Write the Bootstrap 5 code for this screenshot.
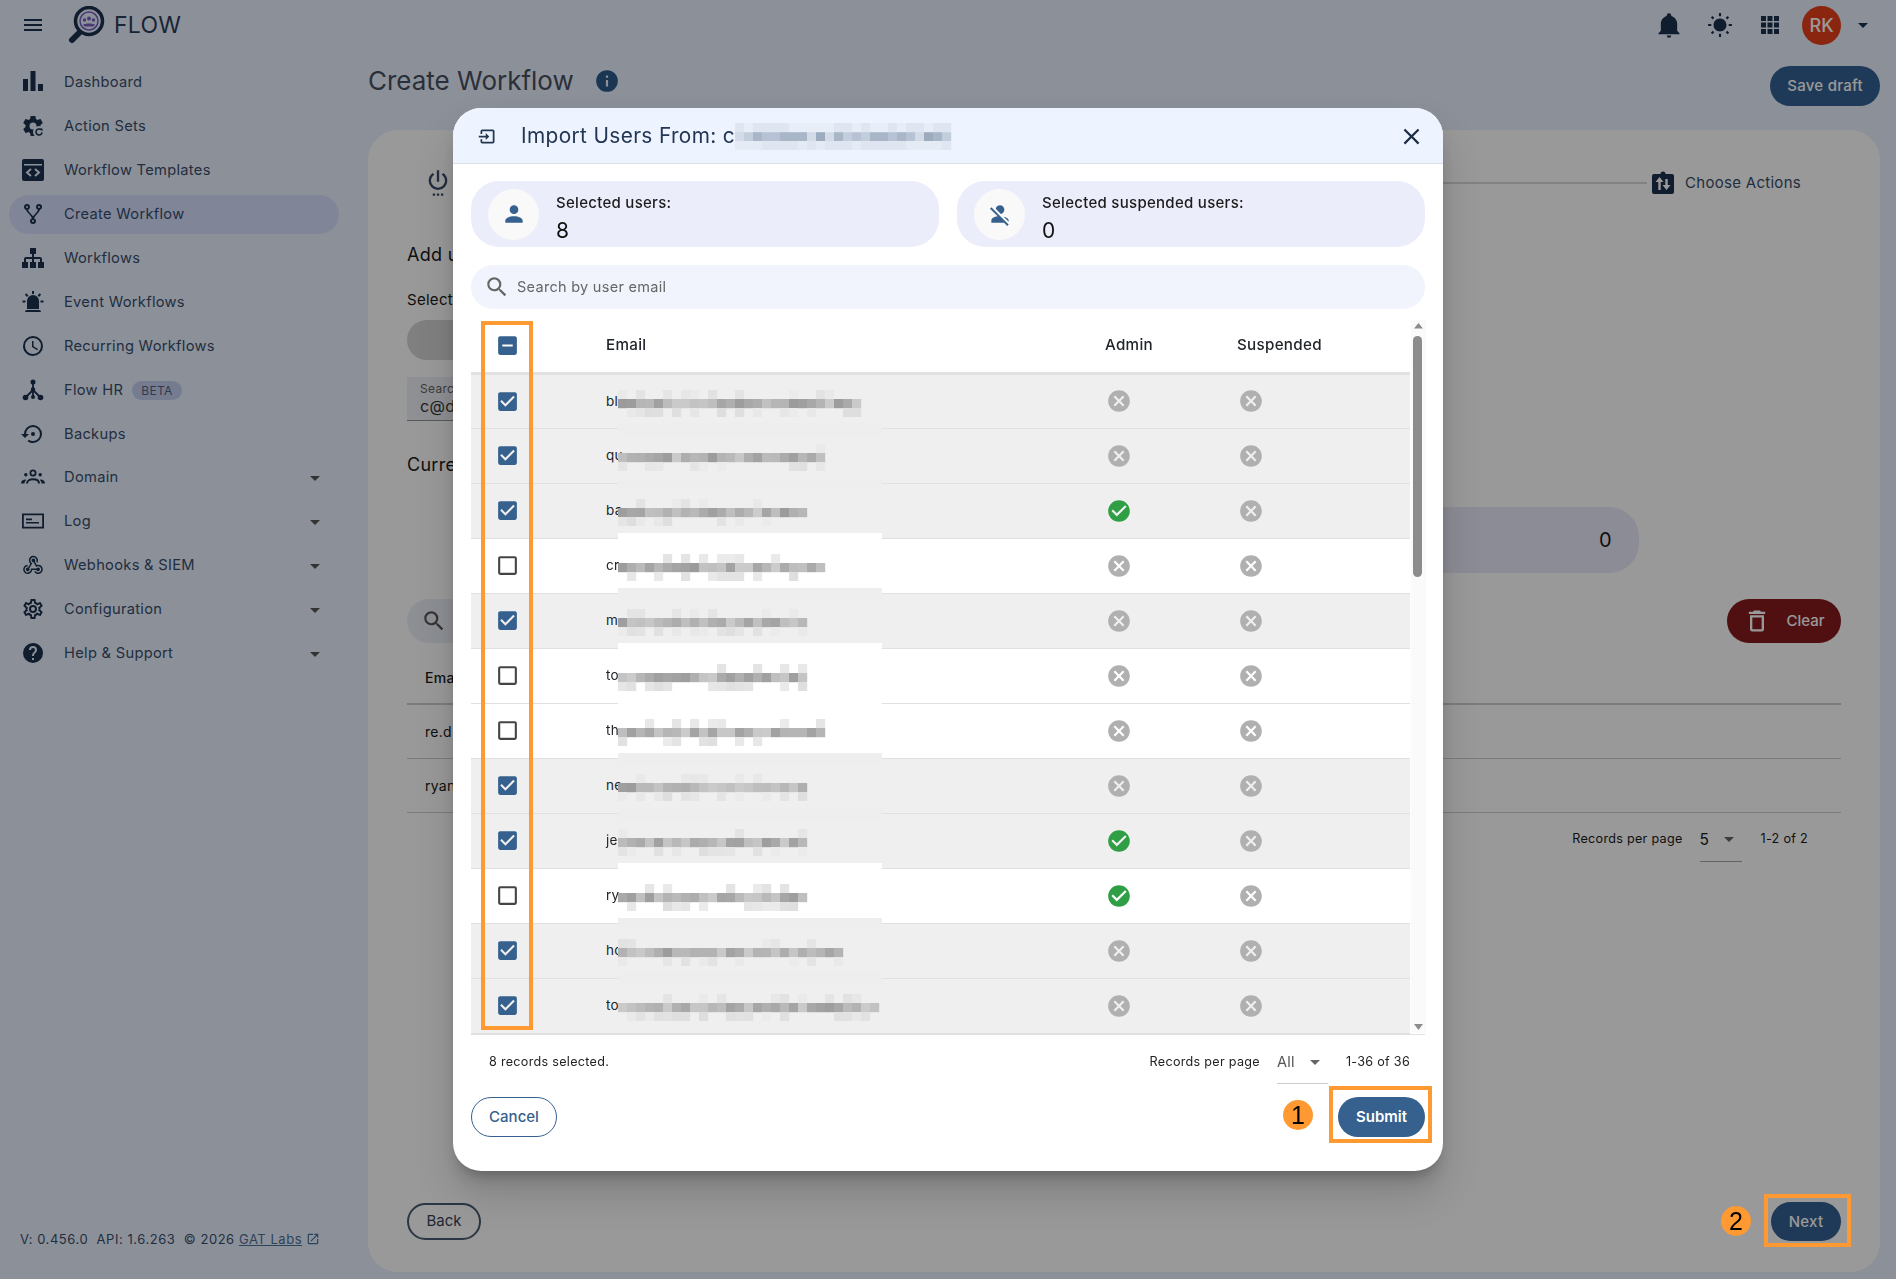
<!DOCTYPE html>
<html lang="en">
<head>
<meta charset="UTF-8" />
<title>Create Workflow</title>
<link href="https://cdn.jsdelivr.net/npm/bootstrap@5.3.0/dist/css/bootstrap.min.css" rel="stylesheet" />
<style>
  body { font-family: Inter, "Liberation Sans", sans-serif; background: #e7f0ff; height: 1279px; overflow: hidden; letter-spacing: .0178em; color: #000; }
  svg { fill: currentColor; flex: none; display: block; }
  .top-bar { height: 50px; color: #001a3a; }
  .menu-btn { margin-left: 21px; width: 24px; }
  .brand-word { font-size: 23px; line-height: 1; color: #12294a; letter-spacing: .01em; margin-left: 8px; }
  .logo-mark { margin-left: 23px; }
  .user-dot { width: 39px; height: 39px; background: #e42c00; color: #fff; font-size: 18px; font-weight: 500; letter-spacing: 0; }
  .side-col { width: 368px; height: 1229px; flex: none; }
  .side-list { margin-top: 10px; }
  .side-item { height: 44px; padding-left: 21px; color: #24385a; font-size: 14.7px; position: relative; }
  .side-item:nth-child(10) { margin-top: -1px; }
  .side-item svg { width: 24px; height: 24px; color: #001a3a; margin-right: 19px; }
  .side-item.is-on::before { content: ""; position: absolute; left: 9px; width: 330px; top: 2.5px; height: 39px; background: #d1dcfd; border-radius: 20px; }
  .side-item > * { position: relative; }
  .side-item .menu-caret { position: absolute; left: 303px; top: 11px; margin: 0; color: #444; }
  .beta-chip { background: #bfcaef; color: #3f4f72; font-size: 12px; height: 19px; line-height: 19px; padding: 0 9px; border-radius: 10px; margin-left: 9px; }
  .side-foot { font-size: 13px; color: #24385a; margin-left: 20px; margin-bottom: 30px; letter-spacing: .042em; white-space: pre; }
  .side-foot a { color: #36618e; }
  .main-col { width: 1512px; flex: none; }
  .title-row { height: 80px; }
  .page-title { font-size: 26px; font-weight: 400; color: #323c50; margin: 0; letter-spacing: 0; }
  .info-mark { margin-left: 20px; color: #16497d; }
  .dark-btn { background: #1e5187; color: #fff; border: 0; font-size: 15px; font-weight: 500; border-radius: 20px; height: 40px; padding: 0; letter-spacing: .0178em; }
  .save-btn { width: 110px; margin-top: 16px; }
  .step-card { background: #fff; border-radius: 30px; height: 1142px; padding: 30px 39px 0; position: relative; }
  .step-row { height: 46px; }
  .step-line { height: 2px; background: #d5d5d5; margin: 0 4px 0 0; }
  .step-label { font-size: 15px; color: #24385a; margin-left: 10px; margin-right: 40px; }
  .add-head { font-size: 18px; line-height: 24px; margin-top: 37px; }
  .sel-label { font-size: 15px; line-height: 20px; margin-top: 23px; }
  .grey-pill { height: 40px; background: #d1d1d1; border-radius: 20px; width: 400px; margin-top: 10px; }
  .domain-field { height: 44px; background: #ebeef4; border-bottom: 1px solid #888; margin-top: 17px; width: 400px; padding: 5px 13px; font-size: 12px; line-height: 14px; color: #555; }
  .domain-field div { font-size: 16px; line-height: 20px; color: #222; }
  .cur-head { font-size: 18px; line-height: 24px; margin-top: 32px; }
  .zero-pill { height: 66px; width: 600px; margin: 30px 202px 0 auto; background: #e7e7fa; border-radius: 30px; font-size: 20px; padding-right: 27px; }
  .tool-row { height: 44px; margin-top: 26px; }
  .tool-search { width: 500px; height: 44px; background: #e8edf5; border-radius: 22px; padding-left: 14px; color: #444; }
  .clear-btn { background: #780205; color: #fff; font-size: 15px; font-weight: 500; width: 114px; height: 44px; border-radius: 22px; border: 0; padding: 0; }
  .bg-row { border-bottom: 1px solid #c9c9c9; height: 54px; padding-left: 18px; font-size: 14px; }
  .bg-head { height: 62px; border-bottom-width: 2px; font-weight: 500; padding-top: 8px; }
  .pager-row { font-size: 12.6px; height: 49px; padding-right: 33px; }
  .pager-row .pick-num { font-size: 15.5px; width: 42px; margin: 0 19px 0 17px; border-bottom: 1px solid #999; height: 49px; padding-top: 15px; position: relative; }
  .pick-num svg { position: absolute; right: 1px; top: 14px; color: #555; }
  .back-btn { position: absolute; left: 39px; top: 1073px; width: 74px; height: 37px; background: transparent; border: 2px solid #364a66; border-radius: 19px; font-size: 15px; padding: 0; color: #1c2c44; }
  .next-btn { position: absolute; right: 39px; top: 1072px; width: 70px; height: 39px; padding-top: 1px; }

  .modal-backdrop.show { background: #212121; opacity: .46; }
  .import-box { position: fixed; left: 453px; top: 108px; width: 990px; height: 1063px; z-index: 1060; border: 0; border-radius: 28px; overflow: hidden; background: #fff; box-shadow: 0 11px 15px -7px rgba(0,0,0,.3), 0 24px 38px 3px rgba(0,0,0,.14); }
  .import-box .modal-header { height: 56px; background: #edf3ff; border-bottom: 1px solid #dcdfe4; padding: 1px 18px 0 24px; border-radius: 0; flex: none; }
  .import-title { font-size: 20.8px; font-weight: 400; color: #233653; margin: 0 0 0 23px; line-height: 1; letter-spacing: .018em; }
  .x-btn { color: #1c2c44; margin-left: auto; }
  .import-box .modal-body { padding: 17px 18px 0; flex: none; }
  .stat-pill { width: 468px; height: 66px; background: #ecedfa; border-radius: 28px; padding-left: 17px; }
  .stat-disc { width: 51px; height: 51px; border-radius: 50%; background: #f9f9f9; color: #36618e; margin-right: 17px; }
  .stat-name { font-size: 15px; line-height: 18px; font-weight: 500; color: #1c1c1c; margin-top: 10px; }
  .stat-val { font-size: 21px; line-height: 26px; margin-top: 6px; color: #111; }
  .find-bar { height: 44px; margin-top: 18px; background: #f1f4fd; border-radius: 22px; padding-left: 13px; color: #666; font-size: 14.5px; }
  .find-bar svg { margin-right: 7px; }
  .grid-wrap { margin-top: 11px; height: 713px; }
  .user-table { width: 939px; flex: none; margin: 0; table-layout: fixed; font-size: 13.5px; --bs-table-bg: transparent; }
  .user-table th { height: 53px; font-weight: 500; font-size: 15.2px; border-bottom: 3px solid #e2e2e2; padding: 0; vertical-align: middle; }
  .user-table td { height: 55px; padding: 0; vertical-align: middle; border-bottom: 1px solid #e0e0e0; }
  .user-table tr.on-row td { background: #efefef; }
  .user-table .box-cell { padding-left: 24px; color: #36618e; }
  .box-cell svg { width: 25px; height: 25px; }
  .box-cell .off-box { color: #444; }
  .mail-cell { position: relative; }
  .mail-cell svg { position: absolute; left: 12px; top: 0; overflow: visible; }
  .state-icon { width: 26px; height: 26px; margin-left: 1px; }
  .scroll-col { width: 15px; background: #fafafa; margin-left: 1px; color: #8c8c8c; }
  .scroll-thumb { width: 9px; height: 241px; background: #8c8c8c; border-radius: 5px; margin: 1px 0 0 2px; }
  .foot-line { border-top: 1px solid #e0e0e0; margin-top: 1px; height: 49px; font-size: 12.6px; color: #222; }
  .foot-line .pick-num { font-size: 14.5px; width: 51px; margin: 0 18px 0 17px; border-bottom: 1px solid #ccc; height: 49px; padding-top: 16px; position: relative; color: #555; }
  .foot-line .pick-num svg { position: absolute; right: 1px; top: 15px; color: #666; }
  .import-box .modal-footer { padding: 14px 18px 0; border: 0; display: flex; justify-content: space-between; flex: none; }
  .import-box .modal-footer > * { margin: 0; }
  .cancel-btn { width: 86px; height: 40px; border: 1px solid #36618e; color: #36618e; background: #fff; border-radius: 20px; font-size: 15px; font-weight: 500; padding: 0; }
  .submit-btn { width: 87px; height: 40px; background: #36618e; color: #fff; border: 0; border-radius: 20px; font-size: 15px; font-weight: 600; padding: 0; }
  .mark-box { position: fixed; border: 4px solid #ff9a33; z-index: 1070; }
  .mark-num { position: fixed; width: 30px; height: 30px; border-radius: 50%; background: #ff9a33; z-index: 1070; font: 25px/30px "Liberation Sans", sans-serif; color: #000; text-align: center; letter-spacing: 0; }
</style>
</head>
<body>
<svg width="0" height="0" style="position:absolute">
  <symbol id="i-menu" viewBox="0 0 24 24"><path d="M3,6H21V8H3V6M3,11H21V13H3V11M3,16H21V18H3V16Z"/></symbol>
  <symbol id="i-bars" viewBox="0 0 24 24"><path d="M2 9h5v12H2zM9.500 1h5v20h-5zM17 14h5v7h-5z"/></symbol>
  <symbol id="i-cogsync" viewBox="0 0 24 24"><path d="M12,15.500A3.500,3.500 0 0,1 8.500,12A3.500,3.500 0 0,1 12,8.500A3.500,3.500 0 0,1 15.500,12A3.500,3.500 0 0,1 12,15.500M19.430,12.970C19.470,12.650 19.500,12.330 19.500,12C19.500,11.670 19.470,11.340 19.430,11L21.540,9.370C21.730,9.220 21.780,8.950 21.660,8.730L19.660,5.270C19.540,5.050 19.270,4.960 19.050,5.050L16.560,6.050C16.040,5.660 15.500,5.320 14.870,5.070L14.500,2.420C14.460,2.180 14.250,2 14,2H10C9.750,2 9.540,2.180 9.500,2.420L9.130,5.070C8.500,5.320 7.960,5.660 7.440,6.050L4.950,5.050C4.730,4.960 4.460,5.050 4.340,5.270L2.340,8.730C2.210,8.950 2.270,9.220 2.460,9.370L4.570,11C4.530,11.340 4.500,11.670 4.500,12C4.500,12.330 4.530,12.650 4.570,12.970L2.460,14.630C2.270,14.780 2.210,15.050 2.340,15.270L4.340,18.730C4.460,18.950 4.730,19.030 4.950,18.950L7.440,17.940C7.960,18.340 8.500,18.680 9.130,18.930L9.500,21.580C9.540,21.820 9.750,22 10,22H14C14.250,22 14.460,21.820 14.500,21.580L14.870,18.930C15.500,18.670 16.040,18.340 16.560,17.940L19.050,18.950C19.270,19.030 19.540,18.950 19.660,18.730L21.660,15.270C21.780,15.050 21.730,14.780 21.540,14.630L19.430,12.970Z"/><circle cx="18" cy="18" r="6" fill="#e7f0ff"/><path d="M21 18.500a3 3 0 1 1-1-2.800" fill="none" stroke="currentColor" stroke-width="1.600"/><path d="M18.500 14.500h3v3z"/></symbol>
  <symbol id="i-tpl" viewBox="0 0 24 24"><path fill-rule="evenodd" d="M3 1h18a2 2 0 0 1 2 2v18a2 2 0 0 1-2 2H3a2 2 0 0 1-2-2V3a2 2 0 0 1 2-2zM3 6v1.500h18V6z"/><path d="M10 11l-4 3.500L10 18M14 11l4 3.500L14 18" fill="none" stroke="#e7f0ff" stroke-width="2"/></symbol>
  <symbol id="i-fork" viewBox="0 0 24 24"><path d="M6,2A3,3 0 0,1 9,5C9,6.280 8.190,7.380 7.060,7.810C7.150,8.270 7.390,8.830 8,9.630C9,10.920 11,12.830 12,14.170C13,12.830 15,10.920 16,9.630C16.610,8.830 16.850,8.270 16.940,7.810C15.810,7.380 15,6.280 15,5A3,3 0 0,1 18,2A3,3 0 0,1 21,5C21,6.320 20.140,7.450 18.950,7.850C18.870,8.370 18.640,9 18,9.830C17,11.170 15,13.080 14,14.380C13.390,15.170 13.150,15.730 13.060,16.190C14.190,16.620 15,17.720 15,19A3,3 0 0,1 12,22A3,3 0 0,1 9,19C9,17.720 9.810,16.620 10.940,16.190C10.850,15.730 10.610,15.170 10,14.380C9,13.080 7,11.170 6,9.830C5.360,9 5.130,8.370 5.050,7.850C3.860,7.450 3,6.320 3,5A3,3 0 0,1 6,2M6,4A1,1 0 0,0 5,5A1,1 0 0,0 6,6A1,1 0 0,0 7,5A1,1 0 0,0 6,4M18,4A1,1 0 0,0 17,5A1,1 0 0,0 18,6A1,1 0 0,0 19,5A1,1 0 0,0 18,4M12,18A1,1 0 0,0 11,19A1,1 0 0,0 12,20A1,1 0 0,0 13,19A1,1 0 0,0 12,18Z"/></symbol>
  <symbol id="i-sitemap" viewBox="0 0 24 24"><path d="M9,2V8H11V11H5C3.890,11 3,11.890 3,13V16H1V22H7V16H5V13H11V16H9V22H15V16H13V13H19V16H17V22H23V16H21V13C21,11.890 20.110,11 19,11H13V8H15V2H9Z"/></symbol>
  <symbol id="i-alarm" viewBox="0 0 24 24"><path d="M6,6.900L3.870,4.780L5.280,3.370L7.400,5.500L6,6.900M13,1V4H11V1H13M20.130,4.780L18,6.900L16.600,5.500L18.720,3.370L20.130,4.780M4.500,10.500V12.500H1.500V10.500H4.500M19.500,10.500H22.500V12.500H19.500V10.500M6,20H18A2,2 0 0,1 20,22H4A2,2 0 0,1 6,20M12,5A6,6 0 0,1 18,11V19H6V11A6,6 0 0,1 12,5Z"/></symbol>
  <symbol id="i-clock" viewBox="0 0 24 24"><path d="M12,20A8,8 0 0,0 20,12A8,8 0 0,0 12,4A8,8 0 0,0 4,12A8,8 0 0,0 12,20M12,2A10,10 0 0,1 22,12A10,10 0 0,1 12,22C6.470,22 2,17.500 2,12A10,10 0 0,1 12,2M12.500,7V12.250L17,14.920L16.250,16.150L11,13V7H12.500Z"/></symbol>
  <symbol id="i-tree" viewBox="0 0 24 24"><path d="M12 4v8M12 12l-7 7M12 12l7 7M12 12v7" fill="none" stroke="currentColor" stroke-width="1.800"/><circle cx="12" cy="4" r="2.500"/><circle cx="12" cy="11.500" r="2.200"/><circle cx="4.500" cy="19.500" r="2.800"/><circle cx="19.500" cy="19.500" r="2.800"/><circle cx="12" cy="19" r="2"/></symbol>
  <symbol id="i-restore" viewBox="0 0 24 24"><path d="M12,3A9,9 0 0,0 3,12H0L4,16L8,12H5A7,7 0 0,1 12,5A7,7 0 0,1 19,12A7,7 0 0,1 12,19C10.500,19 9.090,18.500 7.940,17.700L6.500,19.140C8.040,20.300 9.940,21 12,21A9,9 0 0,0 21,12A9,9 0 0,0 12,3M14,12A2,2 0 0,0 12,10A2,2 0 0,0 10,12A2,2 0 0,0 12,14A2,2 0 0,0 14,12Z"/></symbol>
  <symbol id="i-people" viewBox="0 0 24 24"><circle cx="12" cy="8" r="2.600" fill="none" stroke="currentColor" stroke-width="1.800"/><circle cx="4.800" cy="9.800" r="1.700"/><circle cx="19.200" cy="9.800" r="1.700"/><path d="M6 18.500c0-3 2.800-4.300 6-4.300s6 1.300 6 4.300" fill="none" stroke="currentColor" stroke-width="2"/><path d="M0 18.500c0-2.600 2-4 4.500-4l.800.500c-1.300.800-1.800 2-1.800 3.500zM24 18.500c0-2.600-2-4-4.500-4l-.800.500c1.300.800 1.800 2 1.800 3.500z"/></symbol>
  <symbol id="i-log" viewBox="0 0 24 24"><path d="M1 4.500h22v15H1zM2.800 6.300v11.400h18.400V6.300z" fill-rule="evenodd"/><path d="M5 9.500h6v1.700H5zM5 13h13v1.500H5z"/></symbol>
  <symbol id="i-hook" viewBox="0 0 24 24"><path d="M10.460,19C9,21.070 6.150,21.590 4.090,20.150C2.040,18.710 1.560,15.840 3,13.750C3.870,12.500 5.210,11.830 6.580,11.770L6.630,13.200C5.720,13.270 4.840,13.740 4.270,14.560C3.270,16 3.580,17.940 4.950,18.910C6.330,19.870 8.260,19.500 9.260,18.070C9.570,17.620 9.750,17.130 9.820,16.630V15.620L15.400,15.580L15.470,15.470C16,14.550 17.150,14.230 18.050,14.750C18.950,15.270 19.260,16.430 18.730,17.350C18.200,18.260 17.040,18.580 16.140,18.060C15.730,17.830 15.440,17.460 15.310,17.040L11.240,17.060C11.130,17.730 10.870,18.380 10.460,19M17.740,11.860C20.270,12.170 22.070,14.440 21.760,16.930C21.450,19.430 19.150,21.200 16.620,20.890C15.130,20.710 13.900,19.860 13.190,18.680L14.430,17.960C14.920,18.730 15.750,19.280 16.750,19.410C18.500,19.620 20.050,18.430 20.260,16.760C20.470,15.090 19.230,13.560 17.500,13.350C16.960,13.290 16.440,13.360 15.970,13.530L15.120,13.970L12.540,9.200H12.320C11.260,9.160 10.440,8.290 10.470,7.250C10.500,6.210 11.400,5.400 12.450,5.440C13.500,5.500 14.330,6.360 14.300,7.400C14.280,7.850 14.110,8.240 13.840,8.540L15.740,12.050C16.360,11.850 17.040,11.780 17.740,11.860M8.250,9.140C7.250,6.790 8.310,4.100 10.620,3.120C12.940,2.140 15.620,3.250 16.620,5.600C17.210,6.970 17.090,8.470 16.420,9.670L15.180,8.950C15.600,8.140 15.670,7.150 15.270,6.220C14.590,4.620 12.780,3.850 11.230,4.500C9.670,5.160 8.970,7 9.650,8.600C9.930,9.260 10.400,9.770 10.970,10.110L11.360,10.320L8.290,15.310C8.320,15.360 8.360,15.420 8.390,15.500C8.880,16.410 8.540,17.560 7.620,18.050C6.710,18.540 5.560,18.180 5.060,17.240C4.570,16.310 4.910,15.160 5.830,14.670C6.220,14.460 6.650,14.410 7.060,14.500L9.370,10.730C8.900,10.300 8.500,9.760 8.250,9.140Z"/></symbol>
  <symbol id="i-cogline" viewBox="0 0 24 24"><path d="M12,8A4,4 0 0,1 16,12A4,4 0 0,1 12,16A4,4 0 0,1 8,12A4,4 0 0,1 12,8M12,10A2,2 0 0,0 10,12A2,2 0 0,0 12,14A2,2 0 0,0 14,12A2,2 0 0,0 12,10M10,22C9.750,22 9.540,21.820 9.500,21.580L9.130,18.930C8.500,18.680 7.960,18.340 7.440,17.940L4.950,18.950C4.730,19.030 4.460,18.950 4.340,18.730L2.340,15.270C2.210,15.050 2.270,14.780 2.460,14.630L4.570,12.970L4.500,12L4.570,11L2.460,9.370C2.270,9.220 2.210,8.950 2.340,8.730L4.340,5.270C4.460,5.050 4.730,4.960 4.950,5.050L7.440,6.050C7.960,5.660 8.500,5.320 9.130,5.070L9.500,2.420C9.540,2.180 9.750,2 10,2H14C14.250,2 14.460,2.180 14.500,2.420L14.870,5.070C15.500,5.320 16.040,5.660 16.560,6.050L19.050,5.050C19.270,4.960 19.540,5.050 19.660,5.270L21.660,8.730C21.790,8.950 21.730,9.220 21.540,9.370L19.430,11L19.500,12L19.430,13L21.540,14.630C21.730,14.780 21.790,15.050 21.660,15.270L19.660,18.730C19.540,18.950 19.270,19.040 19.050,18.950L16.560,17.950C16.040,18.340 15.500,18.680 14.870,18.930L14.500,21.580C14.460,21.820 14.250,22 14,22H10M11.250,4L10.880,6.610C9.680,6.860 8.620,7.500 7.850,8.390L5.440,7.350L4.690,8.650L6.800,10.200C6.400,11.370 6.400,12.640 6.800,13.800L4.680,15.360L5.430,16.660L7.860,15.620C8.630,16.500 9.680,17.140 10.870,17.380L11.240,20H12.760L13.130,17.390C14.320,17.140 15.370,16.500 16.140,15.620L18.570,16.660L19.320,15.360L17.200,13.810C17.600,12.640 17.600,11.370 17.200,10.200L19.310,8.650L18.560,7.350L16.150,8.390C15.380,7.500 14.320,6.860 13.120,6.620L12.750,4H11.250Z"/></symbol>
  <symbol id="i-help" viewBox="0 0 24 24"><path d="M15.070,11.250L14.170,12.170C13.450,12.890 13,13.500 13,15H11V14.500C11,13.390 11.450,12.390 12.170,11.670L13.410,10.410C13.780,10.050 14,9.550 14,9C14,7.890 13.100,7 12,7A2,2 0 0,0 10,9H8A4,4 0 0,1 12,5A4,4 0 0,1 16,9C16,9.880 15.640,10.670 15.070,11.250M13,19H11V17H13M12,2A10,10 0 0,0 2,12A10,10 0 0,0 12,22A10,10 0 0,0 22,12C22,6.470 17.500,2 12,2Z"/></symbol>
  <symbol id="i-caret" viewBox="0 0 24 24"><path d="M7,10L12,15L17,10H7Z"/></symbol>
  <symbol id="i-bell" viewBox="0 0 24 24"><path d="M21,19V20H3V19L5,17V11C5,7.900 7.030,5.170 10,4.290C10,4.190 10,4.100 10,4A2,2 0 0,1 12,2A2,2 0 0,1 14,4C14,4.100 14,4.190 14,4.290C16.970,5.170 19,7.900 19,11V17L21,19M14,21A2,2 0 0,1 12,23A2,2 0 0,1 10,21"/></symbol>
  <symbol id="i-sun" viewBox="0 0 24 24"><path d="M3.550 19.090L4.960 20.500L6.760 18.710L5.340 17.290M12 6C8.690 6 6 8.690 6 12S8.690 18 12 18 18 15.310 18 12C18 8.680 15.310 6 12 6M20 13H23V11H20M17.240 18.710L19.040 20.500L20.450 19.090L18.660 17.290M20.450 5L19.040 3.600L17.240 5.390L18.660 6.810M13 1H11V4H13M6.760 5.390L4.960 3.600L3.550 5L5.340 6.810L6.760 5.390M1 13H4V11H1M13 20H11V23H13"/></symbol>
  <symbol id="i-apps" viewBox="0 0 24 24"><path d="M3 3h5v5H3zM9.500 3h5v5h-5zM16 3h5v5h-5zM3 9.500h5v5H3zM9.500 9.500h5v5h-5zM16 9.500h5v5h-5zM3 16h5v5H3zM9.500 16h5v5h-5zM16 16h5v5h-5z"/></symbol>
  <symbol id="i-close" viewBox="0 0 24 24"><path d="M19,6.410L17.590,5L12,10.590L6.410,5L5,6.410L10.590,12L5,17.590L6.410,19L12,13.410L17.590,19L19,17.590L13.410,12L19,6.410Z"/></symbol>
  <symbol id="i-import" viewBox="0 0 24 24"><path d="M14,12L10,8V11H2V13H10V16M20,18V6C20,4.890 19.100,4 18,4H6A2,2 0 0,0 4,6V9H6V6H18V18H6V15H4V18A2,2 0 0,0 6,20H18A2,2 0 0,0 20,18Z"/></symbol>
  <symbol id="i-user" viewBox="0 0 24 24"><path d="M12,4A4,4 0 0,1 16,8A4,4 0 0,1 12,12A4,4 0 0,1 8,8A4,4 0 0,1 12,4M12,14C16.420,14 20,15.790 20,18V20H4V18C4,15.790 7.580,14 12,14Z"/></symbol>
  <symbol id="i-useroff" viewBox="0 0 24 24"><path d="M12,4A4,4 0 0,1 16,8C16,9.950 14.600,11.580 12.750,11.930L8.070,7.250C8.420,5.400 10.050,4 12,4M12.280,14L18.280,20L20,21.720L18.730,23L15.730,20H4V18C4,16.160 6.500,14.610 9.870,14.140L2.780,7.050L4.050,5.780L12.280,14M20,18V19.180L15.440,14.620C18.100,15.140 20,16.450 20,18Z"/></symbol>
  <symbol id="i-find" viewBox="0 0 24 24"><path d="M9.500,3A6.500,6.500 0 0,1 16,9.500C16,11.110 15.410,12.590 14.440,13.730L14.710,14H15.500L20.500,19L19,20.500L14,15.500V14.710L13.730,14.440C12.590,15.410 11.110,16 9.500,16A6.500,6.500 0 0,1 3,9.500A6.500,6.500 0 0,1 9.500,3M9.500,5C7,5 5,7 5,9.500C5,12 7,14 9.500,14C12,14 14,12 14,9.500C14,7 12,5 9.500,5Z"/></symbol>
  <symbol id="i-no" viewBox="0 0 24 24"><path d="M12,2C17.530,2 22,6.470 22,12C22,17.530 17.530,22 12,22C6.470,22 2,17.530 2,12C2,6.470 6.470,2 12,2M15.590,7L12,10.590L8.410,7L7,8.410L10.590,12L7,15.590L8.410,17L12,13.410L15.590,17L17,15.590L13.410,12L17,8.410L15.590,7Z"/></symbol>
  <symbol id="i-yes" viewBox="0 0 24 24"><path d="M12 2C6.500 2 2 6.500 2 12S6.500 22 12 22 22 17.500 22 12 17.500 2 12 2M10 17L5 12L6.410 10.590L10 14.170L17.590 6.580L19 8L10 17Z"/></symbol>
  <symbol id="i-trash" viewBox="0 0 24 24"><path d="M6,19A2,2 0 0,0 8,21H16A2,2 0 0,0 18,19V7H6V19M8,9H16V19H8V9M15.500,4L14.500,3H9.500L8.500,4H5V6H19V4H15.500Z"/></symbol>
  <symbol id="i-info" viewBox="0 0 24 24"><path d="M13,9H11V7H13M13,17H11V11H13M12,2A10,10 0 0,0 2,12A10,10 0 0,0 12,22A10,10 0 0,0 22,12A10,10 0 0,0 12,2Z"/></symbol>
  <symbol id="i-power" viewBox="0 0 24 24"><path d="M16.560,3.440L15.110,4.890C16.840,5.940 18,7.830 18,10A6,6 0 0,1 12,16A6,6 0 0,1 6,10C6,7.830 7.160,5.940 8.880,4.880L7.440,3.440C5.360,4.880 4,7.280 4,10A8,8 0 0,0 12,18A8,8 0 0,0 20,10C20,7.280 18.640,4.880 16.560,3.440M13,1H11V11H13M7.500 21h2v2h-2zM11 21h2v2h-2zM14.500 21h2v2h-2z"/></symbol>
  <symbol id="i-swap" viewBox="0 0 24 24"><path fill-rule="evenodd" d="M3 3h6.500a2.500 2.500 0 0 1 5 0H21a2 2 0 0 1 2 2v16a2 2 0 0 1-2 2H3a2 2 0 0 1-2-2V5a2 2 0 0 1 2-2z"/><path d="M8.500 6l-4 5h2.800v8h2.400v-8h2.800zM15.500 19l4-5h-2.800V8h-2.400v6h-2.800z" fill="#fff"/></symbol>
  <symbol id="i-ext" viewBox="0 0 24 24"><path d="M14,3V5H17.590L7.760,14.830L9.170,16.240L19,6.410V10H21V3M19,19H5V5H12V3H5C3.890,3 3,3.900 3,5V19A2,2 0 0,0 5,21H19A2,2 0 0,0 21,19V12H19V19Z"/></symbol>
  <symbol id="i-box-on" viewBox="0 0 24 24"><path d="M10,17L5,12L6.410,10.590L10,14.170L17.590,6.580L19,8M19,3H5C3.890,3 3,3.890 3,5V19A2,2 0 0,0 5,21H19C20.110,21 21,20.100 21,19V5C21,3.890 20.100,3 19,3Z"/></symbol>
  <symbol id="i-box-off" viewBox="0 0 24 24"><path d="M19,3H5C3.890,3 3,3.890 3,5V19A2,2 0 0,0 5,21H19A2,2 0 0,0 21,19V5C21,3.890 20.100,3 19,3M19,5V19H5V5H19Z"/></symbol>
  <symbol id="i-box-mid" viewBox="0 0 24 24"><path d="M17,13H7V11H17M19,3H5C3.890,3 3,3.890 3,5V19A2,2 0 0,0 5,21H19A2,2 0 0,0 21,19V5C21,3.890 20.100,3 19,3Z"/></symbol>
</svg>

<header class="top-bar d-flex align-items-center">
  <svg class="menu-btn" width="24" height="24"><use href="#i-menu"/></svg>
  <svg class="logo-mark" width="38" height="38" viewBox="0 0 38 38">
    <path d="M11 27L4 34" stroke="#001a3a" stroke-width="6" stroke-linecap="round" fill="none"/>
    <circle cx="21" cy="15" r="13.500" fill="#e7f0ff" stroke="#001a3a" stroke-width="3.500"/>
    <circle cx="21" cy="15" r="9" fill="none" stroke="#6a4fb8" stroke-width="1.500"/>
    <circle cx="21" cy="12.500" r="2" fill="#6a4fb8"/><circle cx="16.500" cy="14" r="1.700" fill="#6a4fb8"/><circle cx="25.500" cy="14" r="1.700" fill="#6a4fb8"/>
    <path d="M15 19c1-2 11-2 12 0l-2 1.500h-8z" fill="#6a4fb8"/>
  </svg>
  <span class="brand-word">FLOW</span>
  <svg class="ms-auto" width="28" height="28" style="margin-right:24px"><use href="#i-bell"/></svg>
  <svg width="26" height="26" style="margin-right:25px"><use href="#i-sun"/></svg>
  <svg width="24" height="24" style="margin-right:20px"><use href="#i-apps"/></svg>
  <div class="user-dot rounded-circle d-flex align-items-center justify-content-center">RK</div>
  <svg width="24" height="24" style="margin:0 21px 0 10px"><use href="#i-caret"/></svg>
</header>

<div class="d-flex">
  <aside class="side-col d-flex flex-column">
    <nav class="side-list">
      <div class="side-item d-flex align-items-center"><svg><use href="#i-bars"/></svg><span>Dashboard</span></div>
      <div class="side-item d-flex align-items-center"><svg><use href="#i-cogsync"/></svg><span>Action Sets</span></div>
      <div class="side-item d-flex align-items-center"><svg><use href="#i-tpl"/></svg><span>Workflow Templates</span></div>
      <div class="side-item is-on d-flex align-items-center"><svg><use href="#i-fork"/></svg><span>Create Workflow</span></div>
      <div class="side-item d-flex align-items-center"><svg><use href="#i-sitemap"/></svg><span>Workflows</span></div>
      <div class="side-item d-flex align-items-center"><svg><use href="#i-alarm"/></svg><span>Event Workflows</span></div>
      <div class="side-item d-flex align-items-center"><svg><use href="#i-clock"/></svg><span>Recurring Workflows</span></div>
      <div class="side-item d-flex align-items-center"><svg><use href="#i-tree"/></svg><span>Flow HR</span><span class="beta-chip">BETA</span></div>
      <div class="side-item d-flex align-items-center"><svg><use href="#i-restore"/></svg><span>Backups</span></div>
      <div class="side-item d-flex align-items-center"><svg><use href="#i-people"/></svg><span>Domain</span><svg class="menu-caret"><use href="#i-caret"/></svg></div>
      <div class="side-item d-flex align-items-center"><svg><use href="#i-log"/></svg><span>Log</span><svg class="menu-caret"><use href="#i-caret"/></svg></div>
      <div class="side-item d-flex align-items-center"><svg><use href="#i-hook"/></svg><span>Webhooks &amp; SIEM</span><svg class="menu-caret"><use href="#i-caret"/></svg></div>
      <div class="side-item d-flex align-items-center"><svg><use href="#i-cogline"/></svg><span>Configuration</span><svg class="menu-caret"><use href="#i-caret"/></svg></div>
      <div class="side-item d-flex align-items-center"><svg><use href="#i-help"/></svg><span>Help &amp; Support</span><svg class="menu-caret"><use href="#i-caret"/></svg></div>
    </nav>
    <div class="side-foot mt-auto d-flex align-items-center">V: 0.456.0  API: 1.6.263  © 2026 <a href="#">GAT Labs</a><svg class="ms-1" width="14" height="14" style="color:#36618e"><use href="#i-ext"/></svg></div>
  </aside>

  <main class="main-col">
    <div class="title-row d-flex justify-content-between align-items-start">
      <div class="d-flex align-items-center" style="margin-top:15px">
        <h1 class="page-title">Create Workflow</h1>
        <svg class="info-mark" width="26" height="26"><use href="#i-info"/></svg>
      </div>
      <button class="dark-btn save-btn">Save draft</button>
    </div>
    <section class="step-card">
      <div class="step-row d-flex align-items-center">
        <svg width="28" height="28" style="margin:0 20px 0 17px;color:#24385a"><use href="#i-power"/></svg>
        <div class="step-line flex-grow-1"></div>
        <svg width="24" height="24" style="color:#001a3a"><use href="#i-swap"/></svg>
        <span class="step-label">Choose Actions</span>
      </div>
      <div class="add-head">Add users</div>
      <div class="sel-label">Select</div>
      <div class="grey-pill"></div>
      <div class="domain-field">Search<div>c@d</div></div>
      <div class="cur-head">Current</div>
      <div class="zero-pill d-flex align-items-center justify-content-end">0</div>
      <div class="tool-row d-flex justify-content-between">
        <div class="tool-search d-flex align-items-center"><svg width="26" height="26"><use href="#i-find"/></svg></div>
        <button class="clear-btn d-flex align-items-center justify-content-center"><svg width="28" height="28" style="margin-right:15px"><use href="#i-trash"/></svg>Clear</button>
      </div>
      <div class="bg-row bg-head d-flex align-items-center">Email</div>
      <div class="bg-row d-flex align-items-center">re.d</div>
      <div class="bg-row d-flex align-items-center">ryan</div>
      <div class="pager-row d-flex justify-content-end align-items-start">
        <span style="margin-top:17px">Records per page</span>
        <div class="pick-num">5<svg width="24" height="24"><use href="#i-caret"/></svg></div>
        <span style="margin-top:17px">1-2 of 2</span>
      </div>
      <button class="back-btn">Back</button>
      <button class="dark-btn next-btn">Next</button>
    </section>
  </main>
</div>

<div class="modal-backdrop show"></div>

<div class="modal-content import-box">
  <div class="modal-header d-flex align-items-center">
    <svg width="21" height="21" style="color:#233653"><use href="#i-import"/></svg>
    <h5 class="import-title">Import Users From: c</h5>
    <svg id="titleBlur" width="222" height="27" class="ms-0"></svg>
    <svg class="x-btn" width="27" height="27"><use href="#i-close"/></svg>
  </div>
  <div class="modal-body">
    <div class="d-flex justify-content-between">
      <div class="stat-pill d-flex align-items-center">
        <div class="stat-disc d-flex align-items-center justify-content-center"><svg width="26" height="26"><use href="#i-user"/></svg></div>
        <div><div class="stat-name">Selected users:</div><div class="stat-val">8</div></div>
      </div>
      <div class="stat-pill d-flex align-items-center">
        <div class="stat-disc d-flex align-items-center justify-content-center"><svg width="26" height="26"><use href="#i-useroff"/></svg></div>
        <div><div class="stat-name">Selected suspended users:</div><div class="stat-val">0</div></div>
      </div>
    </div>
    <div class="find-bar d-flex align-items-center"><svg width="26" height="26"><use href="#i-find"/></svg>Search by user email</div>
    <div class="grid-wrap d-flex">
      <table class="table user-table">
        <colgroup><col style="width:135px" /><col style="width:499px" /><col style="width:132px" /><col /></colgroup>
        <thead>
          <tr>
            <th class="box-cell"><svg><use href="#i-box-mid"/></svg></th>
            <th>Email</th><th>Admin</th><th>Suspended</th>
          </tr>
        </thead>
        <tbody id="userRows"></tbody>
      </table>
      <div class="scroll-col d-flex flex-column">
        <svg width="15" height="15" viewBox="0 0 15 15"><path d="M7.500 3L12 8.500H3z"/></svg>
        <div class="scroll-thumb"></div>
        <svg class="mt-auto" width="15" height="15" viewBox="0 0 15 15"><path d="M3 6h9L7.500 12z"/></svg>
      </div>
    </div>
    <div class="foot-line d-flex align-items-start justify-content-between">
      <span style="margin:18px 0 0 18px">8 records selected.</span>
      <div class="d-flex align-items-start" style="padding-right:15px">
        <span style="margin-top:18px">Records per page</span>
        <div class="pick-num">All<svg width="24" height="24"><use href="#i-caret"/></svg></div>
        <span style="margin-top:18px">1-36 of 36</span>
      </div>
    </div>
  </div>
  <div class="modal-footer">
    <button class="cancel-btn">Cancel</button>
    <button class="submit-btn">Submit</button>
  </div>
</div>

<div class="mark-box" style="left:481px;top:321px;width:52px;height:709px"></div>
<div class="mark-box" style="left:1329px;top:1086px;width:103px;height:57px"></div>
<div class="mark-box" style="left:1764px;top:1194px;width:87px;height:53px"></div>
<div class="mark-num" style="left:1283px;top:1100px">1</div>
<div class="mark-num" style="left:1721px;top:1206px">2</div>

<script>
  // name start, end of blurred part (page x), selected, admin
  const users = [
    ["bl", 857, true, false], ["qu", 821, true, false], ["ba", 803, true, true],
    ["cr", 821, false, false], ["m", 811, true, false], ["to", 803, false, false],
    ["th", 829, false, false], ["ne", 811, true, false], ["je", 803, true, true],
    ["ry", 811, false, true], ["ho", 839, true, false], ["to", 875, true, false]
  ];
  let seed = 17;
  const rnd = () => (seed = (seed * 16807) % 2147483647) / 2147483647;
  const grey = (v) => `rgb(${v},${v},${v})`;

  function mosaic(end, bg, first) {
    // the first row keeps the header line, the others get a patch over the row line
    let out = first ? "" : `<rect x="0" y="-6" width="264" height="12" fill="${bg}"/>`;
    const cells = Math.round((end - 618) / 9);
    for (let i = 0; i < cells; i++) {
      const main = 155 + Math.floor(rnd() * 50);
      out += `<rect x="${i * 9}" y="24" width="9.200" height="9.200" fill="${grey(main)}"/>`;
      if (rnd() > 0.5) out += `<rect x="${i * 9}" y="33" width="9.200" height="9" fill="${grey(222 + Math.floor(rnd() * 14))}"/>`;
      if (rnd() > 0.75) out += `<rect x="${i * 9}" y="15" width="9.200" height="9" fill="${grey(226 + Math.floor(rnd() * 10))}"/>`;
    }
    return out;
  }

  document.getElementById("userRows").innerHTML = users.map(([name, end, on, admin], idx) => `
    <tr class="${on ? "on-row" : ""}">
      <td class="box-cell"><svg class="${on ? "" : "off-box"}"><use href="#i-box-${on ? "on" : "off"}"/></svg></td>
      <td class="mail-cell">${name}<svg width="264" height="55">${mosaic(end, on ? "#eeeeee" : "#ffffff", idx === 0)}</svg></td>
      <td><svg class="state-icon" style="color:${admin ? "#2f9e44" : "#b0b0b0"}"><use href="#i-${admin ? "yes" : "no"}"/></svg></td>
      <td><svg class="state-icon" style="color:#b0b0b0"><use href="#i-no"/></svg></td>
    </tr>`).join("");

  // blurred part of the domain in the dialog title
  let title = "";
  for (let i = 0; i < 24; i++) {
    const c = ["#a9b6c8", "#b7c3d4", "#c3cedd", "#d3dbe8", "#9dabbf"][Math.floor(rnd() * 5)];
    title += `<rect x="${i * 9}" y="9" width="9.200" height="9.200" fill="${c}"/>`;
    title += `<rect x="${i * 9}" y="0" width="9.200" height="9.200" fill="${rnd() > 0.5 ? "#dfe6f1" : "#e8eef8"}"/>`;
    title += `<rect x="${i * 9}" y="18" width="9.200" height="9" fill="${rnd() > 0.5 ? "#e5ebf5" : "#dfe6f1"}"/>`;
  }
  document.getElementById("titleBlur").innerHTML = title;
</script>
<script src="https://cdn.jsdelivr.net/npm/bootstrap@5.3.0/dist/js/bootstrap.bundle.min.js"></script>
</body>
</html>
